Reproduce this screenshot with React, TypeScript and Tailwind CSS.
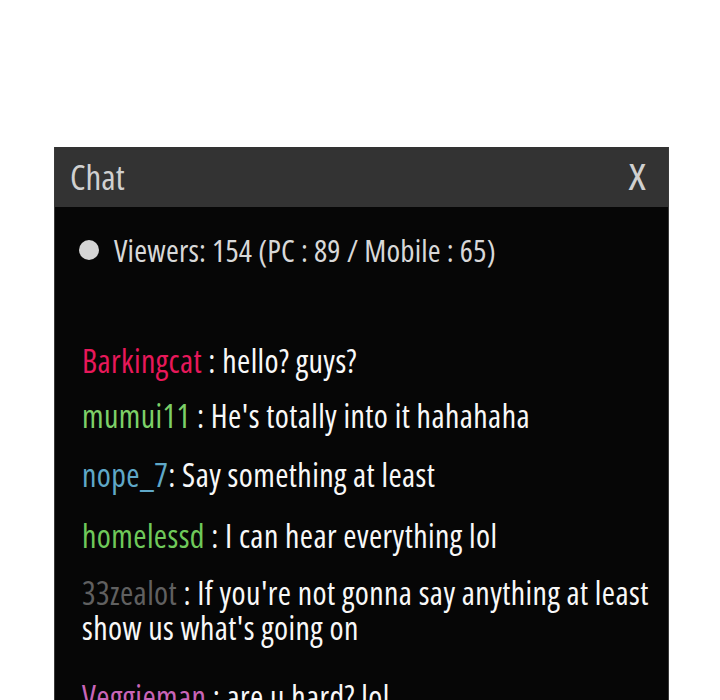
import React from 'react';

type Message = {
  user: string;
  color: string;
  sep: string;
  lines: string[];
  spacing: string;
};

const messages: Message[] = [
  { user: 'Barkingcat', color: 'text-[#e8185a]', sep: ' : ', lines: ['hello? guys?'], spacing: 'mt-0' },
  { user: 'mumui11', color: 'text-[#7dd068]', sep: ' : ', lines: ["He's totally into it hahahaha"], spacing: 'mt-[20px]' },
  { user: 'nope_7', color: 'text-[#5fa8c8]', sep: ': ', lines: ['Say something at least'], spacing: 'mt-[24px]' },
  { user: 'homelessd', color: 'text-[#6fc95a]', sep: ' : ', lines: ['I can hear everything lol'], spacing: 'mt-[26px]' },
  {
    user: '33zealot',
    color: 'text-[#606060]',
    sep: ' : ',
    lines: ["If you're not gonna say anything at least", "show us what's going on"],
    spacing: 'mt-[22px]',
  },
  { user: 'Veggieman', color: 'text-[#c965b8]', sep: ' : ', lines: ['are u hard? lol'], spacing: 'mt-[34px]' },
];

const ChatPanel: React.FC = () => {
  return (
    <div className="w-[615px] ml-[54px] border-x border-[#3a3a3a] bg-[#060606]">
      <div className="h-[60px] bg-[#333333] flex items-center justify-between pl-[15px] pr-[24px]">
        <span className="text-[35px] leading-[60px] text-[#d0d0d0]">Chat</span>
        <span className="text-[36px] leading-[60px] text-[#d0d0d0] scale-x-125">X</span>
      </div>

      <div className="pt-[25px] pl-6 flex items-center gap-[15px]">
        <span className="w-5 h-5 rounded-full bg-[#d4d4d4]" />
        <span className="text-[31px] leading-[36px] tracking-[0.2px] text-[#d8d8d8]">
          Viewers: 154 (PC : 89 / Mobile : 65)
        </span>
      </div>

      <div className="pt-[75px] pl-[27px] pr-1 pb-10 flex flex-col">
        {messages.map((m) => (
          <p
            key={m.user}
            className={`${m.spacing} text-[32px] leading-[35px] tracking-[0.4px] whitespace-nowrap text-[#f8f8f8]`}
          >
            <span className={m.color}>{m.user}</span>
            {m.sep}
            {m.lines.map((line, i) => (
              <React.Fragment key={i}>
                {i > 0 && <br />}
                {line}
              </React.Fragment>
            ))}
          </p>
        ))}
      </div>
    </div>
  );
};

export default function App() {
  return (
    <div className="h-[700px] overflow-hidden bg-white pt-[147px] font-['Open_Sans',sans-serif] font-stretch-condensed">
      <ChatPanel />
    </div>
  );
}
